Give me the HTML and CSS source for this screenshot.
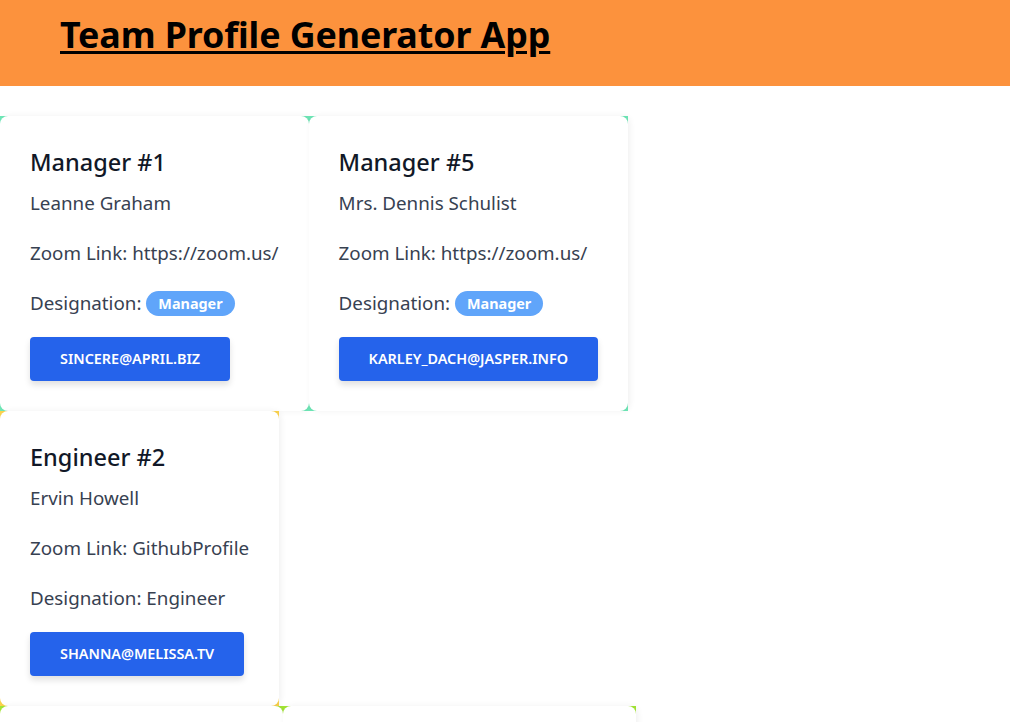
FILE: index.html
```html
<!DOCTYPE html>
<html lang="en">
<head>
<meta charset="utf-8">
<title>Team Profile Generator App</title>
<link rel="stylesheet" href="styles.css">
</head>
<body>
<header class="header">
  <h1 class="title">Team Profile Generator App</h1>
</header>
<main class="team">
  <div class="row row-green">
    <section class="card">
      <h2 class="card-title">Manager #1</h2>
      <p class="line">Leanne Graham</p>
      <p class="line">Zoom Link: https://zoom.us/</p>
      <p class="line last">Designation: <span class="badge">Manager</span></p>
      <button class="email">SINCERE@APRIL.BIZ</button>
    </section>
    <section class="card">
      <h2 class="card-title">Manager #5</h2>
      <p class="line">Mrs. Dennis Schulist</p>
      <p class="line">Zoom Link: https://zoom.us/</p>
      <p class="line last">Designation: <span class="badge">Manager</span></p>
      <button class="email">KARLEY_DACH@JASPER.INFO</button>
    </section>
  </div>
  <div class="row row-yellow">
    <section class="card">
      <h2 class="card-title">Engineer #2</h2>
      <p class="line">Ervin Howell</p>
      <p class="line">Zoom Link: GithubProfile</p>
      <p class="line last">Designation: Engineer</p>
      <button class="email">SHANNA@MELISSA.TV</button>
    </section>
  </div>
  <div class="row row-lime">
    <section class="card card-next"></section>
    <section class="card card-next card-wide"></section>
  </div>
</main>
</body>
</html>
```
FILE: styles.css
```css
* { box-sizing: border-box; }
html, body { margin: 0; padding: 0; background: #ffffff; }
body {
  font-family: "Noto Sans", "Open Sans", "DejaVu Sans", sans-serif;
  color: #374151;
}
.header {
  background: #fc923d;
  height: 86px;
  padding: 10px 60px 0;
}
.title {
  margin: 0;
  font-size: 35.8px;
  font-weight: 700;
  line-height: 49px;
  color: #000000;
  text-decoration: underline;
  text-decoration-thickness: 3px;
  text-underline-offset: 3px;
  letter-spacing: -0.1px;
}
.team {
  margin-top: 30px;
  display: flex;
  flex-direction: column;
  align-items: flex-start;
}
.row {
  display: flex;
}
.row-green { background: #6ee7b7; }
.row-yellow { background: #fcd34d; }
.row-lime { background: #a3e635; }
.card {
  background: #ffffff;
  border-radius: 8px;
  padding: 30px;
  box-shadow: 2px 0 6px rgba(0, 0, 0, 0.06);
}
.card-next { width: 283px; height: 120px; }
.card-wide { width: 353px; }
.card-title {
  margin: 0 0 11px;
  font-size: 23.5px;
  line-height: 32px;
  font-weight: 500;
  color: #111827;
}
.line {
  margin: 0 0 22px;
  font-size: 18.8px;
  line-height: 28px;
  white-space: nowrap;
}
.line.last { margin-bottom: 20px; }
.badge {
  display: inline-block;
  background: #60a5fa;
  color: #ffffff;
  font-size: 14.4px;
  font-weight: 700;
  line-height: 25px;
  padding: 0 12px;
  border-radius: 13px;
  vertical-align: 1px;
}
.email {
  display: block;
  border: 0;
  margin: 0;
  background: #2563eb;
  color: #ffffff;
  font-family: inherit;
  font-size: 14.4px;
  font-weight: 600;
  line-height: 44px;
  height: 44px;
  padding: 0 30px;
  border-radius: 4px;
  box-shadow: 0 4px 6px rgba(0, 0, 0, 0.12);
}
```
